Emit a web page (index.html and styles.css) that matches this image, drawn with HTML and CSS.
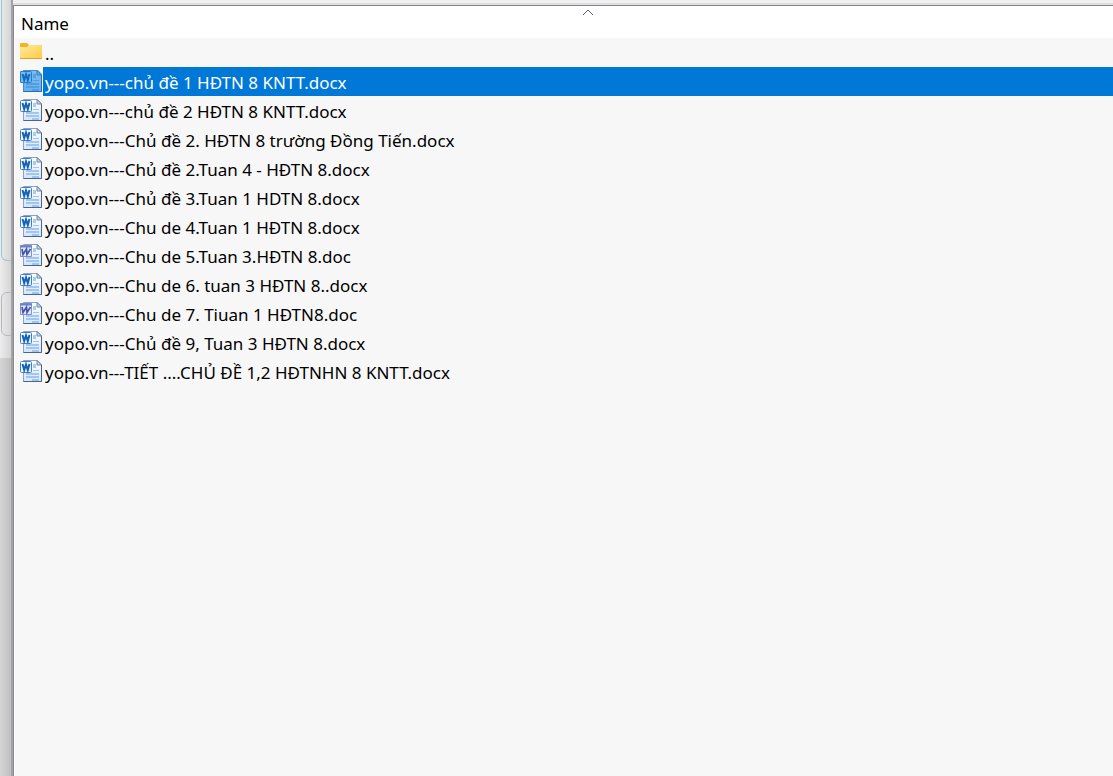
FILE: index.html
```html
<!DOCTYPE html>
<html lang="vi">
<head>
<meta charset="utf-8">
<meta name="viewport" content="width=device-width, initial-scale=1">
<title>Archive files</title>
<link rel="stylesheet" href="styles.css">
</head>
<body>
<svg class="defs" aria-hidden="true">
  <defs>
    <linearGradient id="folderFill" x1="0" y1="0" x2="1" y2="1"><stop offset="0" stop-color="#ffe9a0"/><stop offset="1" stop-color="#ffcb3f"/></linearGradient>
    <linearGradient id="pageFill" x1="0" y1="0" x2="0" y2="1"><stop offset="0" stop-color="#ffffff"/><stop offset="1" stop-color="#d5e5fb"/></linearGradient>
    <linearGradient id="badgeFill" x1="0" y1="0" x2="1" y2="1"><stop offset="0" stop-color="#ffffff"/><stop offset="1" stop-color="#d9eafa"/></linearGradient>
    <symbol id="folder" viewBox="0 0 24 24">
      <path d="M1 4q0-1 1-1h6l2 2h12q1 0 1 1v12H1z" fill="#f5b51d"/>
      <path d="M1 7h7l2-2h12q1 0 1 1v12q0 1-1 1H2q-1 0-1-1z" fill="url(#folderFill)"/>
      <path d="M1 18.500h22" stroke="#dfa52f"/>
    </symbol>
    <symbol id="page" viewBox="0 0 24 24">
      <path d="M4.500 1.500h14l4 4v17h-18z" fill="url(#pageFill)" stroke="#8aa2c8"/>
      <path d="M22.500 6v16.500h-18" fill="none" stroke="#466695"/>
      <path d="M18 1.500v4.500h4.500z" fill="#c7d7ea" stroke="#7188a8"/>
      <path d="M14 5h3v4h-3z" fill="#a9cbee"/>
      <path d="M14 11.500h6" stroke="#a3c4ec"/>
      <path d="M7 15h13M7 18h13M13 21h7" stroke="#8fb9e8" stroke-width="1.500"/>
    </symbol>
    <symbol id="docx" viewBox="0 0 24 24">
      <use href="#page"/>
      <rect x="1.500" y="2.500" width="11" height="11" rx="1" fill="url(#badgeFill)" stroke="#4381c4"/>
      <path d="M3.500 5l1.700 6L7 5.500 8.800 11l1.700-6" fill="none" stroke="#1761b7" stroke-width="2"/>
    </symbol>
    <symbol id="docx-selected" viewBox="0 0 24 24">
      <use href="#docx"/>
      <path d="M1 2h3V1h15l4 4v18H4v-9H1z" fill="#0078d7" fill-opacity=".5"/>
    </symbol>
    <symbol id="doc" viewBox="0 0 24 24">
      <use href="#page"/>
      <path d="M1.500 2.500h11v11h-11z" fill="#e3e7f7" stroke="#8290cb"/>
      <path d="M1 3.500h12" stroke="#6f80c4" stroke-width="2"/>
      <path d="M3 6l1 5.500L7.500 6l.5 5.500L11.500 6" fill="none" stroke="#4356ab" stroke-width="1.700"/>
    </symbol>
  </defs>
</svg>
<div class="window">
  <aside class="backdrop" aria-hidden="true"><div class="group group-blue"></div><div class="group group-gray"></div></aside>
  <main class="panel">
    <table class="files">
      <thead><tr><th scope="col"><button class="sort" type="button">Name<svg class="caret" viewBox="0 0 12 7" aria-hidden="true"><path d="M1 6l5-5 5 5"/></svg></button></th></tr></thead>
      <tbody>
        <tr><td><div class="file"><svg class="icon"><use href="#folder"/></svg><span class="name">..</span></div></td></tr>
        <tr class="selected"><td><div class="file"><svg class="icon"><use href="#docx-selected"/></svg><span class="name">yopo.vn---chủ đề 1 HĐTN 8 KNTT.docx</span></div></td></tr>
        <tr><td><div class="file"><svg class="icon"><use href="#docx"/></svg><span class="name">yopo.vn---chủ đề 2 HĐTN 8 KNTT.docx</span></div></td></tr>
        <tr><td><div class="file"><svg class="icon"><use href="#docx"/></svg><span class="name">yopo.vn---Chủ đề 2. HĐTN 8 trường Đồng Tiến.docx</span></div></td></tr>
        <tr><td><div class="file"><svg class="icon"><use href="#docx"/></svg><span class="name">yopo.vn---Chủ đề 2.Tuan 4 - HĐTN 8.docx</span></div></td></tr>
        <tr><td><div class="file"><svg class="icon"><use href="#docx"/></svg><span class="name">yopo.vn---Chủ đề 3.Tuan 1 HDTN 8.docx</span></div></td></tr>
        <tr><td><div class="file"><svg class="icon"><use href="#docx"/></svg><span class="name">yopo.vn---Chu de 4.Tuan 1 HĐTN 8.docx</span></div></td></tr>
        <tr><td><div class="file"><svg class="icon"><use href="#doc"/></svg><span class="name">yopo.vn---Chu de 5.Tuan 3.HĐTN 8.doc</span></div></td></tr>
        <tr><td><div class="file"><svg class="icon"><use href="#docx"/></svg><span class="name">yopo.vn---Chu de 6. tuan 3 HĐTN 8..docx</span></div></td></tr>
        <tr><td><div class="file"><svg class="icon"><use href="#doc"/></svg><span class="name">yopo.vn---Chu de 7. Tiuan 1 HĐTN8.doc</span></div></td></tr>
        <tr><td><div class="file"><svg class="icon"><use href="#docx"/></svg><span class="name">yopo.vn---Chủ đề 9, Tuan 3 HĐTN 8.docx</span></div></td></tr>
        <tr><td><div class="file"><svg class="icon"><use href="#docx"/></svg><span class="name">yopo.vn---TIẾT ....CHỦ ĐỀ 1,2 HĐTNHN 8 KNTT.docx</span></div></td></tr>
      </tbody>
    </table>
  </main>
</div>
</body>
</html>
```
FILE: styles.css
```css
* { box-sizing: border-box; }
body {
  margin: 0;
  font: 17px/29px "Noto Sans", "Open Sans", sans-serif;
  color: #000;
  background: #f0f0f0;
}
.defs { position: absolute; width: 0; height: 0; }
.window { display: flex; min-height: 100vh; }
.backdrop {
  flex: 0 0 13px;
  overflow: hidden;
  border-right: 2px solid #a3a3a6;
  background:
    linear-gradient(90deg, transparent, rgba(0, 0, 0, .1)),
    linear-gradient(#ececec 358px, #d5d5d5 358px);
}
.group { width: 40px; border: 1px solid; }
.group-blue { height: 261px; border-color: #9bc5dc; border-top: 0; border-radius: 0 0 0 6px; margin-left: 1px; }
.group-gray { height: 44px; margin: 31px 0 0 1px; border-color: #b9b9b9; border-radius: 6px; }
.panel {
  flex: 1;
  min-width: 0;
  margin-top: 5px;
  border-top: 1px solid #828790;
  border-left: 1px solid #828790;
  background: #f7f7f7;
  box-shadow: inset 1px 1px #fff, 0 -2px #dedede;
}
.files { width: 100%; border-collapse: collapse; }
th, td { padding: 0; }
th { background: #fff; font-weight: 400; }
.sort {
  position: relative;
  display: block;
  width: 100%;
  height: 32px;
  padding: 3px 7px 0;
  border: 0;
  background: none;
  color: inherit;
  font: inherit;
  text-align: left;
}
.caret { position: absolute; left: 52%; top: 3px; width: 12px; height: 7px; margin-left: -3px; fill: none; stroke: #606060; }
.file { display: flex; height: 29px; padding-left: 5px; }
.icon { flex: none; width: 24px; height: 24px; margin-top: 2px; }
.name { flex: 1; padding: 2px 2px 0; white-space: nowrap; line-height: 27px; }
.selected .name { background: #0078d7; color: #fff; }
```
